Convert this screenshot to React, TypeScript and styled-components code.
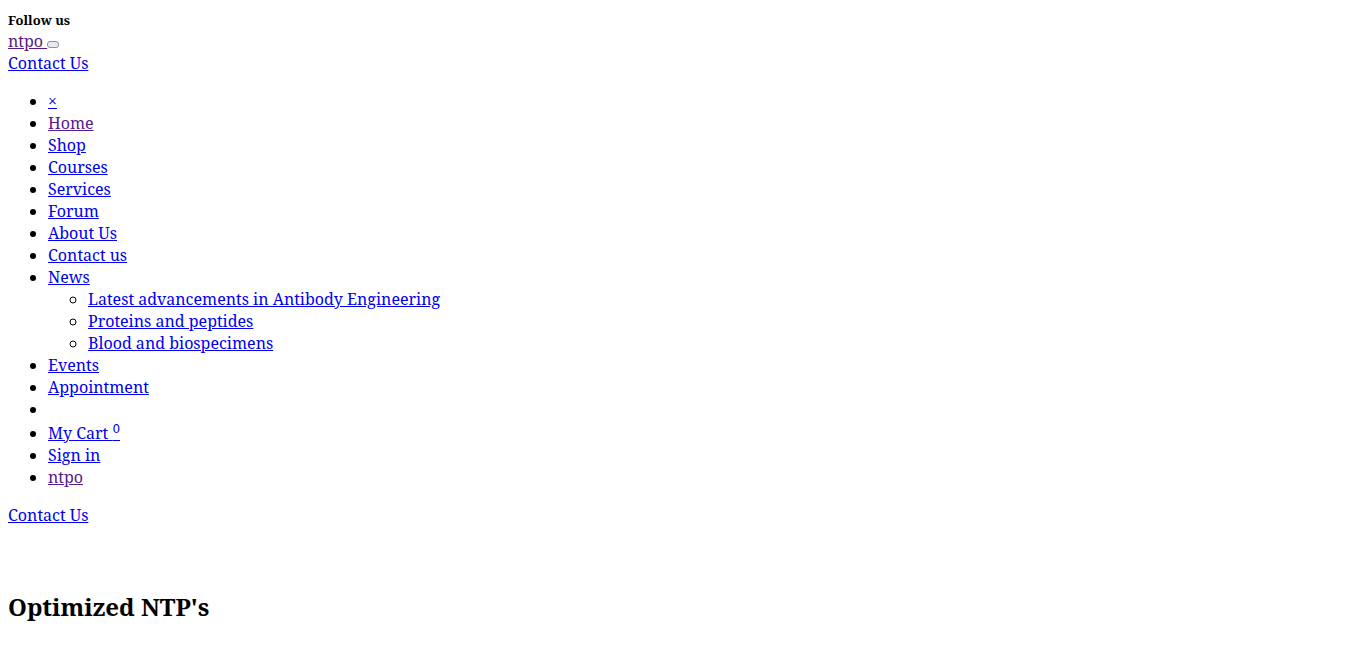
import * as React from "react";
import styled, { createGlobalStyle } from "styled-components";

const GlobalStyle = createGlobalStyle`
  body {
    margin: 8px;
    font-family: "Noto Serif", serif;
    font-size: 16px;
    background: #ffffff;
    color: #000000;
  }
`;

const FollowTitle = styled.div`
  font-size: 13px;
  font-weight: bold;
  margin-top: 3px;
  padding-bottom: 1px;
`;

const Link = styled.a<{ $visited?: boolean }>`
  color: ${(p) => (p.$visited ? "#551a8b" : "#0000ee")};
  text-decoration: underline;
  cursor: pointer;
`;

const Line = styled.div``;

const ToggleButton = styled.button`
  display: inline-block;
  width: 12px;
  height: 7px;
  padding: 0;
  border: 1px solid #8f8f9d;
  border-radius: 3px;
  background: #e9e9ed;
  vertical-align: baseline;
`;

const Menu = styled.ul`
  margin: 16px 0;
  padding-left: 40px;
  list-style: disc;
`;

const SubMenu = styled.ul`
  margin: 0;
  padding-left: 40px;
  list-style: circle;
`;

const CartItem = styled.li`
  padding-top: 2px;
`;

const CartCount = styled.sup`
  font-family: "DejaVu Sans", sans-serif;
  font-size: 12px;
  line-height: 0;
`;

const Heading = styled.h2`
  font-size: 24px;
  font-weight: bold;
  margin: 64px 0 20px;
`;

const mainItems = ["Home", "Shop", "Courses", "Services", "Forum", "About Us", "Contact us"];
const newsItems = [
  "Latest advancements in Antibody Engineering",
  "Proteins and peptides",
  "Blood and biospecimens",
];

export default function App() {
  return (
    <>
      <GlobalStyle />
      <FollowTitle>Follow us</FollowTitle>
      <Line>
        <Link $visited>ntpo </Link>
        <ToggleButton type="button" />
      </Line>
      <Line>
        <Link>Contact Us</Link>
      </Line>
      <Menu>
        <li>
          <Link>×</Link>
        </li>
        {mainItems.map((item) => (
          <li key={item}>
            <Link $visited={item === "Home"}>{item}</Link>
          </li>
        ))}
        <li>
          <Link>News</Link>
          <SubMenu>
            {newsItems.map((item) => (
              <li key={item}>
                <Link>{item}</Link>
              </li>
            ))}
          </SubMenu>
        </li>
        <li>
          <Link>Events</Link>
        </li>
        <li>
          <Link>Appointment</Link>
        </li>
        <li></li>
        <CartItem>
          <Link>
            My Cart <CartCount>0</CartCount>
          </Link>
        </CartItem>
        <li>
          <Link>Sign in</Link>
        </li>
        <li>
          <Link $visited>ntpo</Link>
        </li>
      </Menu>
      <Line>
        <Link>Contact Us</Link>
      </Line>
      <Heading>Optimized NTP's</Heading>
    </>
  );
}
